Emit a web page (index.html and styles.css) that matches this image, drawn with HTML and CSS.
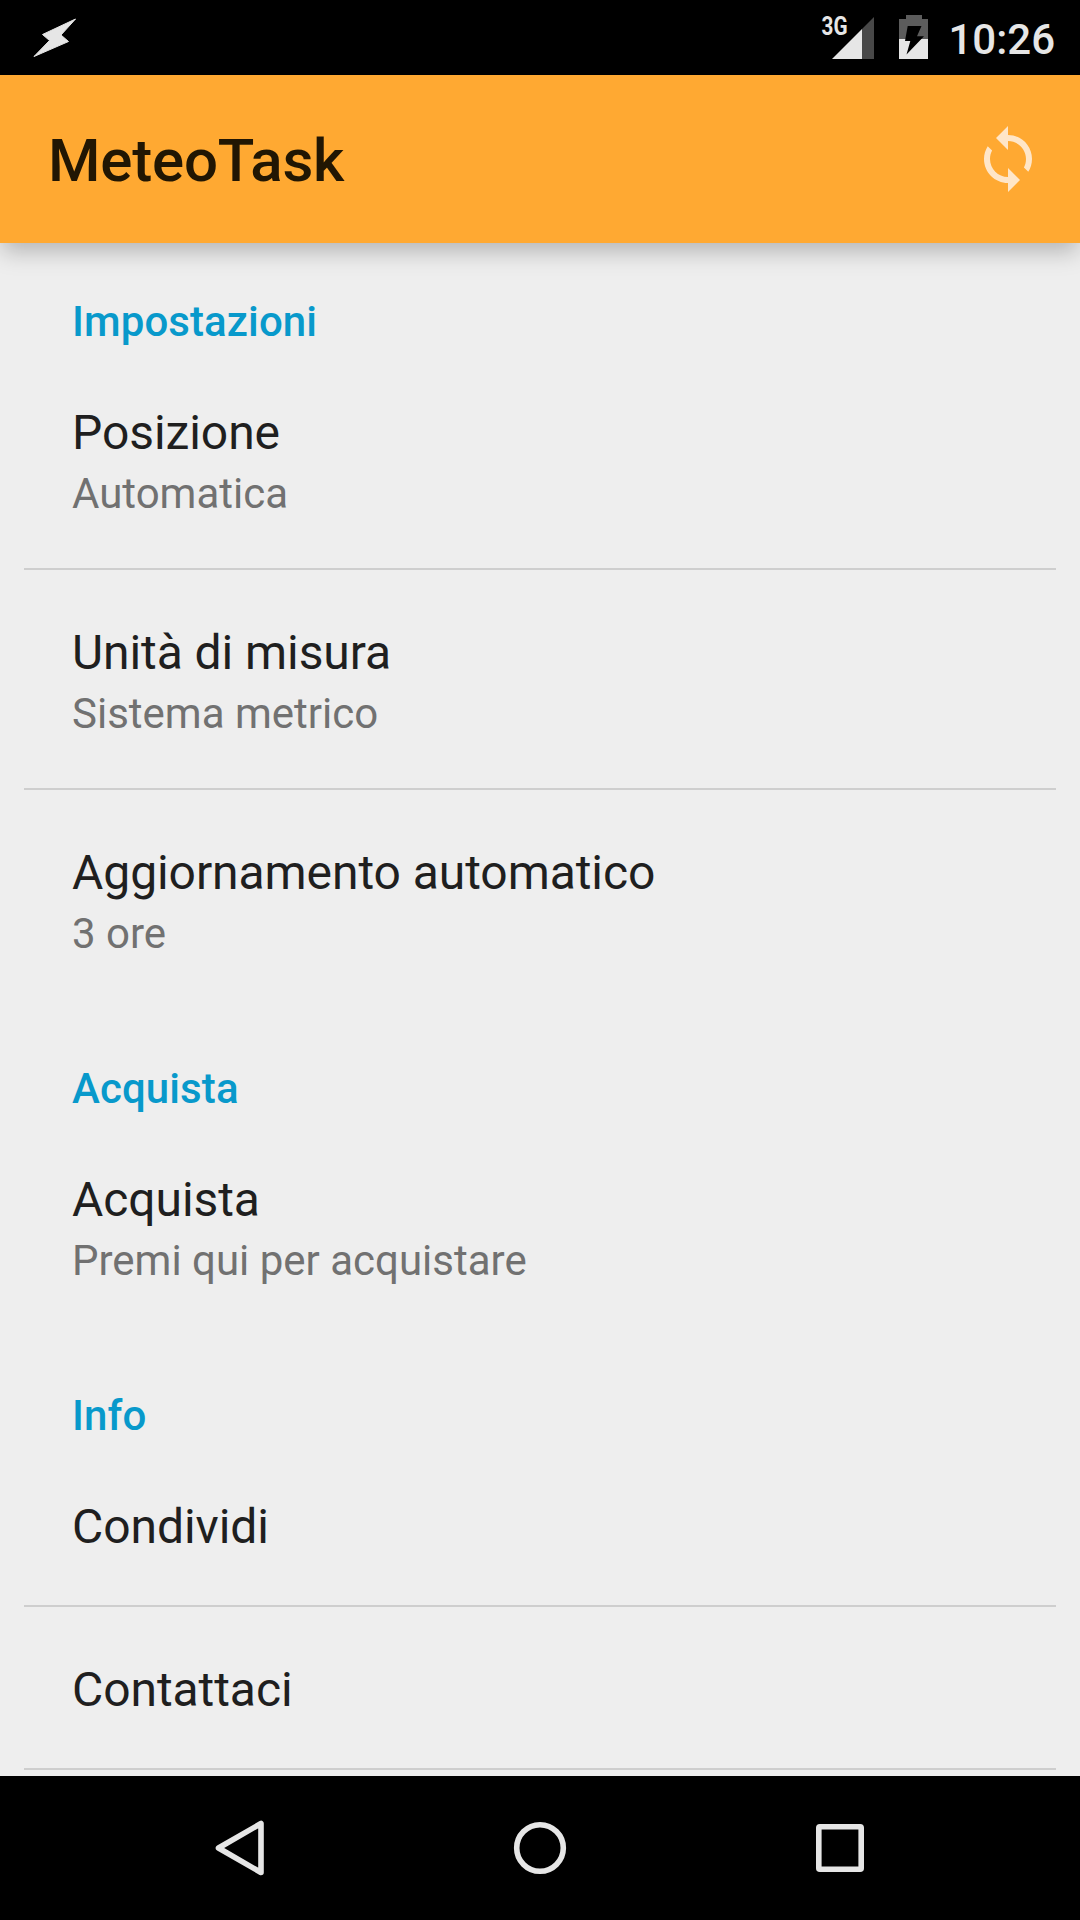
FILE: index.html
```html
<!DOCTYPE html>
<html lang="it">
<head>
<meta charset="utf-8">
<title>MeteoTask</title>
<link rel="stylesheet" href="styles.css">
</head>
<body>
<div class="screen">
  <div class="status">
    <svg class="status-bolt" width="52" height="46" viewBox="28 15 52 46"><path d="M75.500 19 42.500 34.500 49.500 40.500 34 56.500 68.500 41.500 61 35z"/></svg>
    <div class="status-right">
      <svg class="signal" width="54" height="48" viewBox="821 13 54 48">
        <path class="dim" d="M862 29 874 17V59H862z"/>
        <path class="lit" d="M832 59 862 29V59z"/>
        <text class="network" x="821.500" y="35.300" textLength="26" lengthAdjust="spacingAndGlyphs">3G</text>
      </svg>
      <svg class="battery" width="29" height="48" viewBox="899 13 29 48">
        <path class="dim-battery" d="M906 15h16v4h6v20h-29V19h7z"/>
        <path class="lit" d="M899 39h29v20h-29z"/>
        <path class="charge" d="M907.700 26H921.500L917 36.300H924L906.500 54.500 910.300 41H905z"/>
      </svg>
      <span class="clock">10:26</span>
    </div>
  </div>
  <header class="appbar">
    <h1 class="title">MeteoTask</h1>
    <svg class="sync" width="72" height="72" viewBox="0 0 24 24"><path d="M12 4V1L8 5l4 4V6c3.310 0 6 2.690 6 6 0 1.010-.25 1.970-.7 2.800l1.460 1.460C19.540 15.030 20 13.570 20 12c0-4.420-3.580-8-8-8zm0 14c-3.310 0-6-2.690-6-6 0-1.010.25-1.970.7-2.800L5.240 7.740C4.460 8.970 4 10.430 4 12c0 4.420 3.580 8 8 8v3l4-4-4-4v3z"/></svg>
  </header>
  <main class="settings">
    <section>
      <h2 class="category">Impostazioni</h2>
      <div class="item"><div class="name">Posizione</div><div class="summary">Automatica</div></div>
      <div class="item"><div class="name">Unità di misura</div><div class="summary">Sistema metrico</div></div>
      <div class="item"><div class="name">Aggiornamento automatico</div><div class="summary">3 ore</div></div>
    </section>
    <section>
      <h2 class="category">Acquista</h2>
      <div class="item"><div class="name">Acquista</div><div class="summary">Premi qui per acquistare</div></div>
    </section>
    <section>
      <h2 class="category">Info</h2>
      <div class="item single"><div class="name">Condividi</div></div>
      <div class="item single more"><div class="name">Contattaci</div></div>
    </section>
  </main>
  <nav class="navbar">
    <svg width="60" height="60" viewBox="210 1818 60 60"><path d="M261 1823.500V1872.500L218.500 1848z"/></svg>
    <svg width="60" height="60" viewBox="510 1818 60 60"><circle cx="540" cy="1848" r="23.300"/></svg>
    <svg width="60" height="60" viewBox="810 1818 60 60"><rect x="818.800" y="1826.800" width="42.400" height="42.400" rx="1"/></svg>
  </nav>
</div>
</body>
</html>
```
FILE: styles.css
```css
* {
  box-sizing: border-box;
}

body {
  margin: 0;
  font-family: Roboto, "Noto Sans", sans-serif;
}

h1,
h2 {
  margin: 0;
  font-weight: 500;
}

svg {
  display: block;
  flex: none;
}

.screen {
  display: flex;
  flex-direction: column;
  width: 1080px;
  height: 1920px;
  overflow: hidden;
  background: #eeeeee;
}

.status {
  display: flex;
  flex: none;
  justify-content: space-between;
  height: 75px;
  padding: 13px 25px 0 28px;
  background: #000;
}

.status-bolt {
  margin-top: 2px;
  fill: #e6e6e6;
  stroke: #e6e6e6;
  stroke-width: 1px;
  stroke-linejoin: round;
}

.status-right {
  display: flex;
}

.battery {
  margin-left: 24px;
}

.lit {
  fill: #e6e6e6;
}

.dim {
  fill: #484848;
}

.dim-battery {
  fill: #5c5c5c;
}

.charge {
  fill: #000;
}

.network {
  font-size: 25px;
  font-weight: 700;
  fill: #e6e6e6;
}

.clock {
  margin-left: 20px;
  font-size: 42px;
  font-weight: 500;
  line-height: 53px;
  color: #e6e6e6;
}

.appbar {
  z-index: 1;
  display: flex;
  flex: none;
  align-items: center;
  justify-content: space-between;
  height: 168px;
  padding: 0 36px 0 48px;
  background: #ffa932;
  box-shadow: 0 10px 22px -2px rgba(0, 0, 0, 0.25);
}

.title {
  padding-top: 4px;
  font-size: 60px;
  line-height: 70px;
  letter-spacing: -0.2px;
  color: #211603;
}

.sync {
  fill: #ffe6c8;
}

.settings {
  flex: 1;
  min-height: 0;
  padding: 0 24px;
  overflow: hidden;
}

.category {
  height: 107px;
  padding: 55px 48px 0;
  font-size: 42px;
  line-height: 48px;
  letter-spacing: 0.1px;
  color: #0899cb;
}

.item {
  height: 220px;
  padding: 55px 48px 0;
  border-bottom: 2px solid #cecece;
}

.item:last-child:not(.more) {
  border-bottom-color: transparent;
}

.single {
  height: 163px;
}

.name {
  font-size: 48px;
  line-height: 56px;
  letter-spacing: -0.07px;
  color: #1f1f1f;
}

.summary {
  padding-top: 9px;
  font-size: 42px;
  line-height: 48px;
  color: #717171;
}

.navbar {
  display: flex;
  flex: none;
  justify-content: space-between;
  align-items: center;
  height: 144px;
  padding: 0 210px;
  background: #000;
}

.navbar svg {
  fill: none;
  stroke: #e6e6e6;
  stroke-width: 5.6px;
  stroke-linejoin: round;
}
```
